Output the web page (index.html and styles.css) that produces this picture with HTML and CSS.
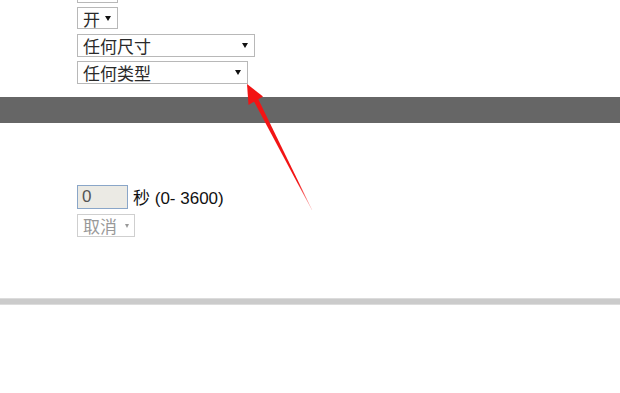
FILE: index.html
```html
<!DOCTYPE html>
<html lang="zh">
<head>
<meta charset="utf-8">
<link rel="stylesheet" href="styles.css">
</head>
<body>
<div class="page">
  <div class="group top">
    <div class="stub"></div>
    <div class="sel sel-on"><span>开</span><i class="tri"></i></div>
    <div class="sel sel-size"><span>任何尺寸</span><i class="tri"></i></div>
    <div class="sel sel-type"><span>任何类型</span><i class="tri"></i></div>
  </div>
  <div class="bar-dark"></div>
  <div class="group mid">
    <div class="row">
      <div class="num">0</div>
      <span class="unit">秒 (0- 3600)</span>
    </div>
    <div class="sel sel-cancel"><span>取消</span><i class="tri tri-gray"></i></div>
  </div>
  <div class="bar-light"></div>
  <svg class="arrow" width="620" height="393" viewBox="0 0 620 393">
    <defs>
      <linearGradient id="fade" x1="256" y1="100" x2="312" y2="210" gradientUnits="userSpaceOnUse">
        <stop offset="0" stop-color="#f21414"/>
        <stop offset="0.75" stop-color="#f21414"/>
        <stop offset="1" stop-color="#f21414" stop-opacity="0.25"/>
      </linearGradient>
    </defs>
    <polygon points="258.2,99 253.8,101.2 311.8,210.1 312.2,209.9" fill="url(#fade)"/>
    <polygon points="247,84 263,96.5 248.5,105" fill="#f21414"/>
  </svg>
</div>
</body>
</html>
```

FILE: styles.css
```css
html, body {
  margin: 0;
  padding: 0;
  background: #fff;
}
.page {
  position: relative;
  width: 620px;
  height: 393px;
  overflow: hidden;
  font-family: "Liberation Sans", "Noto Sans CJK SC", sans-serif;
  font-size: 17px;
  color: #222;
}
.group {
  display: flex;
  flex-direction: column;
  align-items: flex-start;
  padding-left: 77px;
}
.top {
  gap: 4px;
  padding-bottom: 13px;
}
.stub {
  width: 39px;
  height: 2px;
  border: 1px solid #b8b8b8;
  border-top: none;
}
.sel {
  box-sizing: border-box;
  display: flex;
  align-items: center;
  justify-content: space-between;
  border: 1px solid #b8b8b8;
  background: #fff;
  padding: 0 6px 0 5px;
  font-family: "Noto Sans CJK SC", "Liberation Sans", sans-serif;
  font-size: 17px;
  line-height: 1;
  color: #2a2a2a;
}
.sel-on { width: 41px; height: 22px; }
.sel-size { width: 178px; height: 23px; margin-top: 1px; }
.sel-type { width: 171px; height: 23px; }
.tri {
  width: 0;
  height: 0;
  border-left: 3px solid transparent;
  border-right: 3px solid transparent;
  border-top: 5px solid #111;
}
.bar-dark {
  height: 26px;
  background: #666;
}
.mid {
  padding-top: 61px;
  padding-bottom: 61px;
  gap: 5px;
}
.row {
  display: flex;
  align-items: center;
  gap: 5px;
}
.num {
  box-sizing: border-box;
  width: 51px;
  height: 24px;
  border: 1px solid #8aa6c8;
  background: #ebeae4;
  color: #555;
  padding-left: 4px;
  line-height: 22px;
  font-size: 17px;
}
.unit {
  font-size: 17px;
  color: #111;
}
.sel-cancel {
  width: 58px;
  height: 23px;
  border-color: #cfcfcf;
  color: #999;
  padding-right: 5px;
}
.tri-gray {
  border-top-color: #999;
  border-left-width: 2.5px;
  border-right-width: 2.5px;
  border-top-width: 4px;
}
.bar-light {
  height: 5px;
  background: #cbcbcb;
  border-top: 1px solid #dcdcdc;
  border-bottom: 1px solid #dcdcdc;
}
.arrow {
  position: absolute;
  left: 0;
  top: 0;
  pointer-events: none;
}
```
